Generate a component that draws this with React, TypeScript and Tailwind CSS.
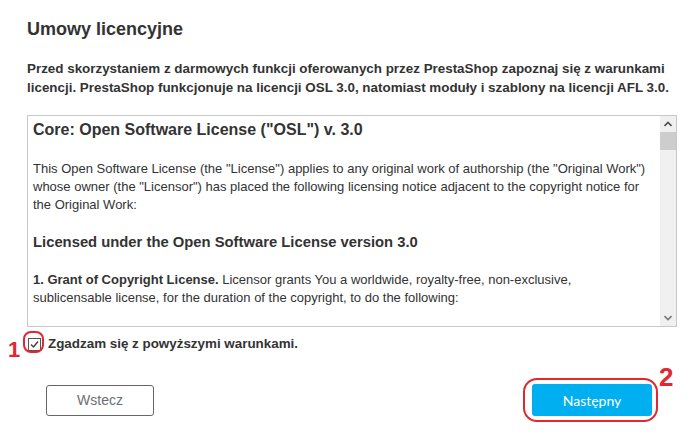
import React from "react";

export default function App() {
  const sans = { fontFamily: '"Liberation Sans", Arial, sans-serif' } as const;
  return (
    <div
      className="relative w-[697px] h-[441px] bg-white pl-[27px] pr-[20px] pt-[18px] text-[#333]"
      style={sans}
    >
      <h1 className="text-[18px] leading-[22px] font-bold">Umowy licencyjne</h1>
      <p className="mt-[19px] text-[13.4px] leading-[19px] font-bold">
        Przed skorzystaniem z darmowych funkcji oferowanych przez PrestaShop zapoznaj się z warunkami licencji. PrestaShop funkcjonuje na licencji OSL 3.0, natomiast moduły i szablony na licencji AFL 3.0.
      </p>

      <div className="mt-[18px] flex h-[212px] w-[650px] border border-[#c8c8c8] overflow-hidden">
        <div className="flex-1 pl-[5px] pr-[10px] pt-[4px]">
          <h2 className="text-[16px] leading-[20px] font-bold">Core: Open Software License ("OSL") v. 3.0</h2>
          <p className="mt-[20px] text-[13px] leading-[18px]">
            This Open Software License (the "License") applies to any original work of authorship (the "Original Work") whose owner (the "Licensor") has placed the following licensing notice adjacent to the copyright notice for the Original Work:
          </p>
          <h3 className="mt-[18px] text-[14.8px] leading-[20px] font-bold">Licensed under the Open Software License version 3.0</h3>
          <p className="mt-[19px] text-[13px] leading-[18px]">
            <b>1. Grant of Copyright License.</b> Licensor grants You a worldwide, royalty-free, non-exclusive, sublicensable license, for the duration of the copyright, to do the following:
          </p>
        </div>
        <div className="flex w-[16px] flex-col bg-[#f0f0f0]">
          <div className="flex h-[16px] items-center justify-center">
            <svg width="8" height="6" viewBox="0 0 8 6">
              <path d="M0.5 5 L4 1.5 L7.5 5" fill="none" stroke="#505050" strokeWidth="1.6" />
            </svg>
          </div>
          <div className="h-[18px] bg-[#cdcdcd]" />
          <div className="flex-1" />
          <div className="flex h-[16px] items-center justify-center">
            <svg width="8" height="6" viewBox="0 0 8 6">
              <path d="M0.5 1 L4 4.5 L7.5 1" fill="none" stroke="#7a7a7a" strokeWidth="1.6" />
            </svg>
          </div>
        </div>
      </div>

      <label className="mt-[8px] flex items-center text-[13.4px] leading-[18px] font-bold">
        <span className="ml-[1px] flex h-[13px] w-[13px] items-center justify-center">
          <svg width="13" height="13" viewBox="0 0 13 13">
            <rect x="0.5" y="0.5" width="12" height="12" fill="#fff" stroke="#555" />
            <path d="M3 6.5 L5.5 9 L10 3.5" fill="none" stroke="#444" strokeWidth="1.5" />
          </svg>
        </span>
        <span className="ml-[7px]">Zgadzam się z powyższymi warunkami.</span>
      </label>

      <div className="mt-[31px] flex items-center justify-between">
        <button className="ml-[19px] h-[31px] w-[108px] rounded-[3px] border border-[#666] bg-white text-[14px] text-[#6b6f75]">
          Wstecz
        </button>
        <button
          className="mr-[25px] h-[32px] w-[120px] rounded-[3px] bg-[#00aff0] text-[14px] text-white"
          style={{ fontFamily: 'Lato, "Open Sans", sans-serif' }}
        >
          Następny
        </button>
      </div>

      <span className="absolute left-[8px] top-[339px] text-[22px] font-bold leading-none text-[#e3262f]">1</span>
      <div className="absolute left-[23px] top-[331px] h-[22px] w-[21px] rounded-[8px] border-2 border-[#e3262f]" />
      <div className="absolute left-[523px] top-[378px] h-[44px] w-[135px] rounded-[14px] border-2 border-[#e3262f]" />
      <span className="absolute left-[659px] top-[364px] text-[26px] font-bold leading-none text-[#e3262f]">2</span>
    </div>
  );
}
